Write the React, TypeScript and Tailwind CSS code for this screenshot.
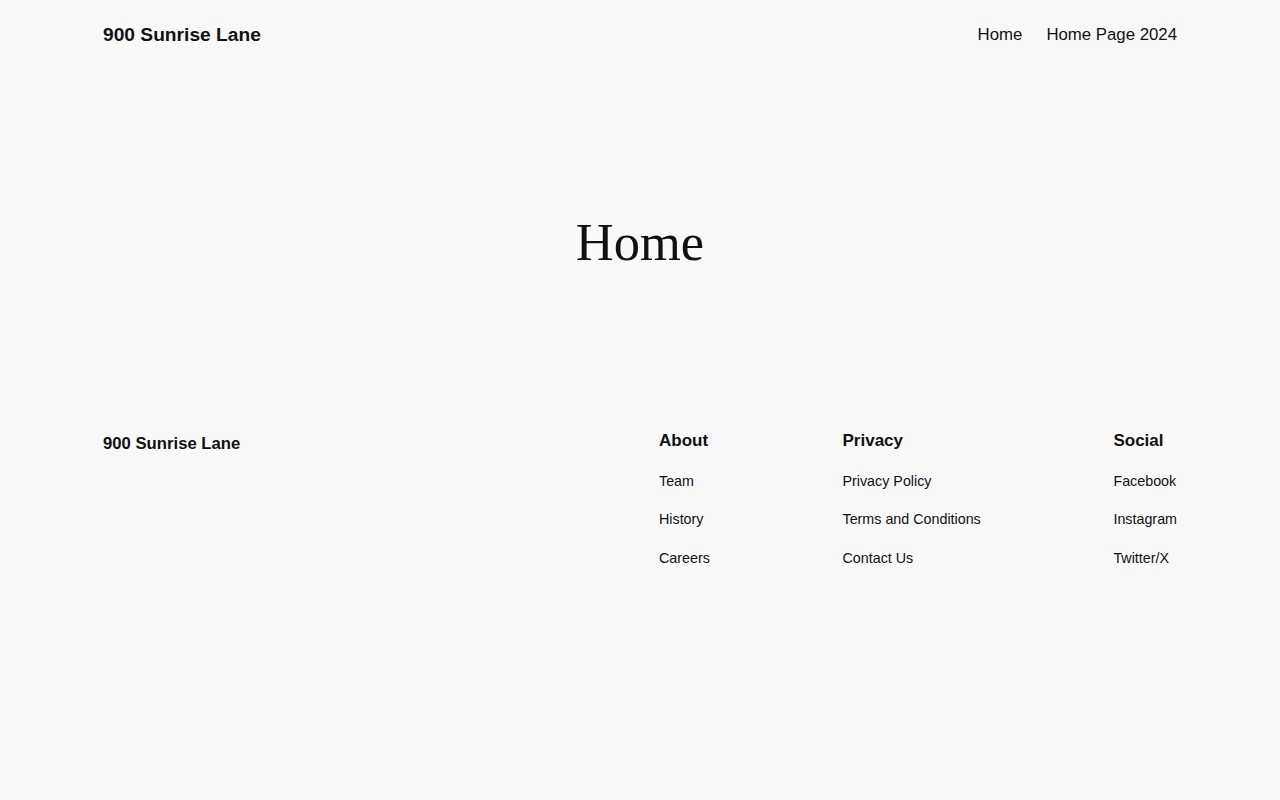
const footerColumns = [
  { title: "About", links: ["Team", "History", "Careers"] },
  { title: "Privacy", links: ["Privacy Policy", "Terms and Conditions", "Contact Us"] },
  { title: "Social", links: ["Facebook", "Instagram", "Twitter/X"] },
];

const App = () => {
  return (
    <div className="min-h-screen bg-[#f9f9f9] text-[#111111] font-['Liberation_Sans',Arial,sans-serif]">
      <header className="flex h-[69px] items-center justify-between px-[103px]">
        <a href="#" className="text-[19.2px] font-bold leading-none">
          900 Sunrise Lane
        </a>
        <nav className="mt-[2px] flex items-center gap-[24px] text-[16.8px] leading-none">
          <a href="#">Home</a>
          <a href="#">Home Page 2024</a>
        </nav>
      </header>

      <main className="pt-[147px] pb-[161px]">
        <h1 className="text-center font-['Liberation_Serif','Times_New_Roman',serif] text-[52.5px] font-normal leading-[52px]">
          Home
        </h1>
      </main>

      <footer className="flex items-start justify-between px-[103px]">
        <p className="mt-[3px] text-[16.7px] font-bold leading-[24px]">900 Sunrise Lane</p>
        <div className="flex w-[518px] justify-between">
          {footerColumns.map((col) => (
            <div key={col.title} className="flex flex-col">
              <h2 className="text-[17px] font-bold leading-[24px]">{col.title}</h2>
              <ul className="mt-[18px] flex flex-col gap-[18.4px] text-[14.3px] leading-[20px]">
                {col.links.map((link) => (
                  <li key={link}>
                    <a href="#">{link}</a>
                  </li>
                ))}
              </ul>
            </div>
          ))}
        </div>
      </footer>
    </div>
  );
};

export default App;
